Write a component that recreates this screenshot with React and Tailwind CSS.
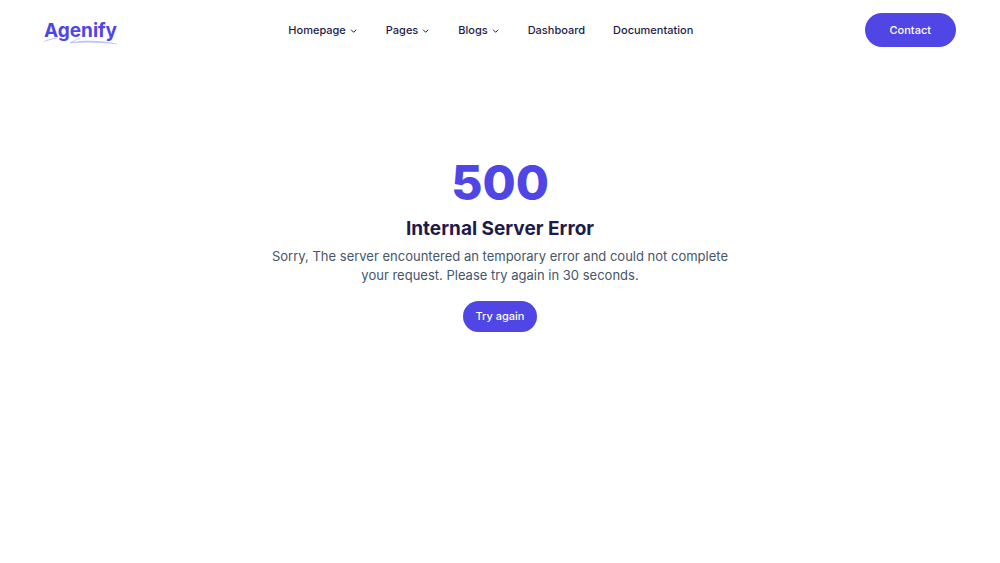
const menus = ["Homepage", "Pages", "Blogs"];

function Chevron() {
  return (
    <svg aria-hidden="true" className="mt-0.5 size-2" viewBox="0 0 8 8" fill="none" stroke="currentColor" strokeWidth="1" strokeLinecap="round" strokeLinejoin="round">
      <path d="M1.4 3 3.700 5.300 6 3" />
    </svg>
  );
}

function Logo() {
  return (
    <a href="#" className="relative isolate pt-0.5 text-[19px] leading-6 font-bold text-[#4f46e5]">
      Agenify
      <svg aria-hidden="true" className="absolute top-4 left-0 -z-10 h-3 w-full text-[#b9c3fc]" viewBox="0 0 73 12" preserveAspectRatio="none" fill="currentColor">
        <path d="M0 8C5 6.200 9 5.300 14 4.600v.6C9 6 5 7 0 8.800Z" />
        <path d="M37 5.200c-3 1.200-6.500 2.500-8.500 3.900C42 7 60 7.600 73 10.800v.7C58 9.400 42 8.900 27 10.300c-1.500.1-1.500-.6-.4-1.200 3.400-1.900 6.400-3.100 9.400-4.100Z" />
      </svg>
    </a>
  );
}

export default function App() {
  return (
    <div className="min-h-screen bg-white font-['Inter',sans-serif] text-[#1e1b4b]">
      <header className="flex items-center justify-between px-11 pt-[13px]">
        <Logo />
        <nav aria-label="Main" className="flex items-center gap-7 text-[11px] leading-4 font-medium">
          {menus.map((name) => (
            <button key={name} type="button" className="flex items-center gap-1">
              {name}
              <Chevron />
            </button>
          ))}
          <a href="#">Dashboard</a>
          <a href="#">Documentation</a>
        </nav>
        <a href="#" className="rounded-full bg-[#4f46e5] px-[25px] py-[9px] text-[11px] leading-4 font-medium text-white">Contact</a>
      </header>
      <main className="mx-auto flex max-w-lg flex-col items-center px-4 pt-28 text-center">
        <p className="text-5xl font-extrabold text-[#4f46e5]">500</p>
        <h1 className="mt-2 text-[19px] leading-7 font-bold">Internal Server Error</h1>
        <p className="mt-1 text-[13px] leading-[19px] text-slate-600">Sorry, The server encountered an temporary error and could not complete your request. Please try again in 30 seconds.</p>
        <button type="button" className="mt-4 rounded-full bg-[#4f46e5] px-[13px] py-2 text-[11px] leading-[15px] font-medium text-white">Try again</button>
      </main>
    </div>
  );
}
